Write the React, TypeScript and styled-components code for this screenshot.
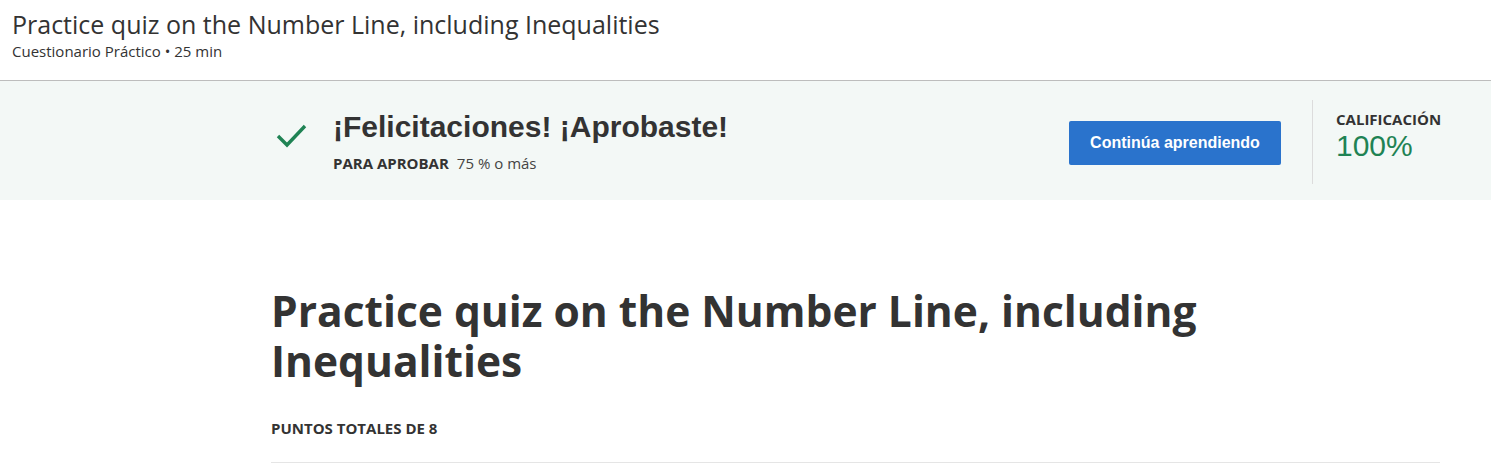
import React from "react";
import { createGlobalStyle, styled } from "styled-components";

const GlobalStyle = createGlobalStyle`
    body {
        margin: 0;
        background: #ffffff;
        font-family: "Open Sans", sans-serif;
        color: #1f1f1f;
    }
`;

const Header = styled.header`
    height: 81px;
    box-sizing: border-box;
    padding: 7px 12px 0;
    border-bottom: 1px solid #bdbdbd;
`;

const HeaderTitle = styled.h1`
    margin: 0;
    font-size: 25px;
    font-weight: 400;
    line-height: 34px;
    color: #333333;
`;

const HeaderMeta = styled.div`
    font-size: 15px;
    line-height: 20px;
    color: #333333;
`;

const Banner = styled.section`
    background: #f3f8f6;
    height: 119px;
    display: flex;
    align-items: center;
`;

const BannerInner = styled.div`
    margin-left: 271px;
    width: 1169px;
    display: flex;
    align-items: center;
`;

const Result = styled.div`
    flex: 1;
    display: flex;
    align-items: flex-start;
    gap: 20px;
`;

const CheckMark = styled.svg`
    width: 42px;
    height: 42px;
    margin-top: 4px;
    flex: none;
`;

const ResultTitle = styled.h2`
    margin: 0;
    font-family: "Liberation Sans", Arial, sans-serif;
    font-size: 30px;
    font-weight: 700;
    line-height: 36px;
    color: #333333;
`;

const PassLine = styled.div`
    margin-top: 8px;
    font-size: 15px;
    line-height: 20px;
    color: #444444;

    b {
        font-weight: 700;
        color: #333333;
        margin-right: 8px;
    }
`;

const PrimaryButton = styled.button`
    width: 212px;
    height: 44px;
    margin: 4px 31px 0 0;
    border: none;
    border-radius: 2px;
    background: #2a73cc;
    color: #ffffff;
    font-family: "Liberation Sans", Arial, sans-serif;
    font-size: 16px;
    font-weight: 700;
    cursor: pointer;
`;

const GradeBox = styled.div`
    flex: none;
    box-sizing: border-box;
    width: 128px;
    height: 84px;
    margin-top: 2px;
    border-left: 1px solid #dcdcdc;
    padding-left: 23px;
    white-space: nowrap;
`;

const GradeLabel = styled.div`
    margin-top: 9px;
    font-size: 15px;
    font-weight: 700;
    color: #333333;
    line-height: 20px;
`;

const GradeValue = styled.div`
    font-family: "Liberation Sans", Arial, sans-serif;
    font-size: 30px;
    line-height: 34px;
    color: #1f8354;
`;

const Main = styled.main`
    margin-left: 271px;
    width: 1169px;
    padding-top: 86px;
`;

const QuizTitle = styled.h1`
    margin: 0;
    font-size: 42.5px;
    font-weight: 700;
    line-height: 50px;
    color: #333333;
`;

const Points = styled.div`
    margin-top: 32px;
    font-size: 15px;
    font-weight: 700;
    color: #333333;
    line-height: 20px;
    padding-bottom: 24px;
    border-bottom: 1px solid #e5e5e5;
`;

export default function App() {
    return (
        <>
            <GlobalStyle />
            <Header>
                <HeaderTitle>Practice quiz on the Number Line, including Inequalities</HeaderTitle>
                <HeaderMeta>Cuestionario Práctico • 25 min</HeaderMeta>
            </Header>
            <Banner>
                <BannerInner>
                    <Result>
                        <CheckMark viewBox="0 0 42 42">
                            <path d="M7 23 L16 32 L34 13" fill="none" stroke="#1f8354" strokeWidth="3.4" />
                        </CheckMark>
                        <div>
                            <ResultTitle>¡Felicitaciones! ¡Aprobaste!</ResultTitle>
                            <PassLine>
                                <b>PARA APROBAR</b>75 % o más
                            </PassLine>
                        </div>
                    </Result>
                    <PrimaryButton>Continúa aprendiendo</PrimaryButton>
                    <GradeBox>
                        <GradeLabel>CALIFICACIÓN</GradeLabel>
                        <GradeValue>100%</GradeValue>
                    </GradeBox>
                </BannerInner>
            </Banner>
            <Main>
                <QuizTitle>
                    Practice quiz on the Number Line, including
                    <br />
                    Inequalities
                </QuizTitle>
                <Points>PUNTOS TOTALES DE 8</Points>
            </Main>
        </>
    );
}
